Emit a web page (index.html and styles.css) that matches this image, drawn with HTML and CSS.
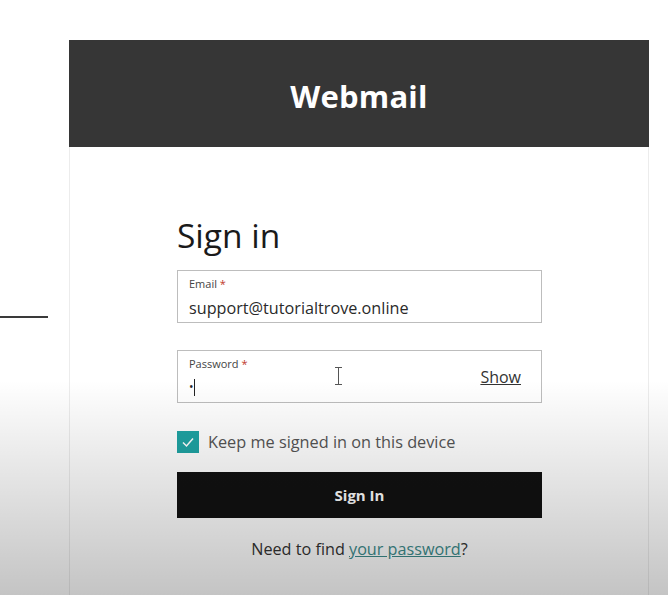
FILE: index.html
```html
<!DOCTYPE html>
<html lang="en">
  <head>
    <meta charset="UTF-8" />
    <meta name="viewport" content="width=device-width, initial-scale=1.0" />
    <title>Webmail - Sign in</title>
    <link rel="stylesheet" href="styles.css">
  </head>
  <body>
    <div class="side-line"></div>

    <div class="login-card">
      <div class="login-header">
        <h1>Webmail</h1>
      </div>

      <form class="login-form">
        <h2>Sign in</h2>

        <label class="field">
          <span class="field-label">Email <span class="req">*</span></span>
          <span class="field-value">support@tutorialtrove.online</span>
        </label>

        <label class="field field-password">
          <span class="field-label">Password <span class="req">*</span></span>
          <span class="field-value">&bull;<span class="caret"></span></span>
          <span class="ibeam"></span>
          <a class="show-link" href="#">Show</a>
        </label>

        <div class="remember">
          <span class="checkbox">
            <svg width="14" height="14" viewBox="0 0 14 14">
              <path d="M2 7.5 L5.5 11 L12 3.5" fill="none" stroke="#fff" stroke-width="1.5" />
            </svg>
          </span>
          <span>Keep me signed in on this device</span>
        </div>

        <button type="button" class="signin-btn">Sign In</button>

        <p class="forgot">Need to find <a href="#">your password</a>?</p>
      </form>
    </div>

    <div class="shade"></div>
  </body>
</html>
```

FILE: styles.css
```css
body {
  margin: 0;
  height: 595px;
  overflow: hidden;
  background: #fff;
  font-family: "Open Sans", "Liberation Sans", sans-serif;
  color: #222;
  position: relative;
}

.side-line {
  position: absolute;
  left: 0;
  top: 316px;
  width: 48px;
  height: 2px;
  background: #3a3a3a;
}

.login-card {
  margin: 40px 0 0 69px;
  width: 580px;
  height: 555px;
  border-left: 1px solid #ececec;
  border-right: 1px solid #ececec;
  box-sizing: border-box;
}

.login-header {
  height: 107px;
  box-sizing: border-box;
  padding-top: 5px;
  background: #363636;
  display: flex;
  align-items: center;
  justify-content: center;
  margin: 0 -1px;
}

.login-header h1 {
  margin: 0;
  color: #fff;
  font-size: 31px;
  font-weight: 700;
  letter-spacing: 0.2px;
}

.login-form {
  padding: 68px 0 0 107px;
  width: 365px;
}

.login-form h2 {
  margin: 0 0 15px;
  font-size: 33.5px;
  font-weight: 500;
  line-height: 40px;
  color: #1a1a1a;
}

.field {
  display: block;
  position: relative;
  height: 53px;
  border: 1px solid #bdbdbd;
  box-sizing: border-box;
  padding: 5px 11px 0;
  margin-bottom: 27px;
}

.field-label {
  display: block;
  font-size: 11px;
  line-height: 15px;
  color: #444;
}

.req {
  color: #c0392b;
}

.field-value {
  display: block;
  margin-top: 7px;
  font-size: 16.2px;
  line-height: 20px;
  color: #2a2a2a;
}

.field-password .field-value {
  margin-top: 6px;
  font-size: 12px;
}

.caret {
  display: inline-block;
  width: 1px;
  height: 17px;
  background: #222;
  vertical-align: middle;
}

.ibeam {
  position: absolute;
  left: 160px;
  top: 16px;
  width: 1px;
  height: 18px;
  background: #555;
}

.ibeam::before,
.ibeam::after {
  content: "";
  position: absolute;
  left: -3px;
  width: 7px;
  height: 1px;
  background: #555;
}

.ibeam::before {
  top: 0;
}

.ibeam::after {
  bottom: 0;
}

.show-link {
  position: absolute;
  right: 20px;
  top: 15px;
  font-size: 16px;
  color: #333;
  text-decoration: underline;
}

.remember {
  display: flex;
  align-items: center;
  gap: 9px;
  margin-top: 28px;
  font-size: 16.3px;
  color: #555;
}

.checkbox {
  width: 22px;
  height: 22px;
  background: #1fa3a3;
  display: flex;
  align-items: center;
  justify-content: center;
}

.signin-btn {
  display: block;
  width: 100%;
  height: 46px;
  margin-top: 19px;
  border: none;
  background: #111;
  color: #fff;
  font-family: inherit;
  font-size: 15px;
  font-weight: 700;
}

.forgot {
  margin: 20px 0 0;
  text-align: center;
  font-size: 16.2px;
  line-height: 22px;
  color: #333;
}

.forgot a {
  color: #3d8c8c;
}

.shade {
  position: absolute;
  left: 0;
  right: 0;
  top: 380px;
  bottom: 0;
  pointer-events: none;
  background: linear-gradient(to bottom, rgba(0, 0, 0, 0), rgba(0, 0, 0, 0.23));
}
```
